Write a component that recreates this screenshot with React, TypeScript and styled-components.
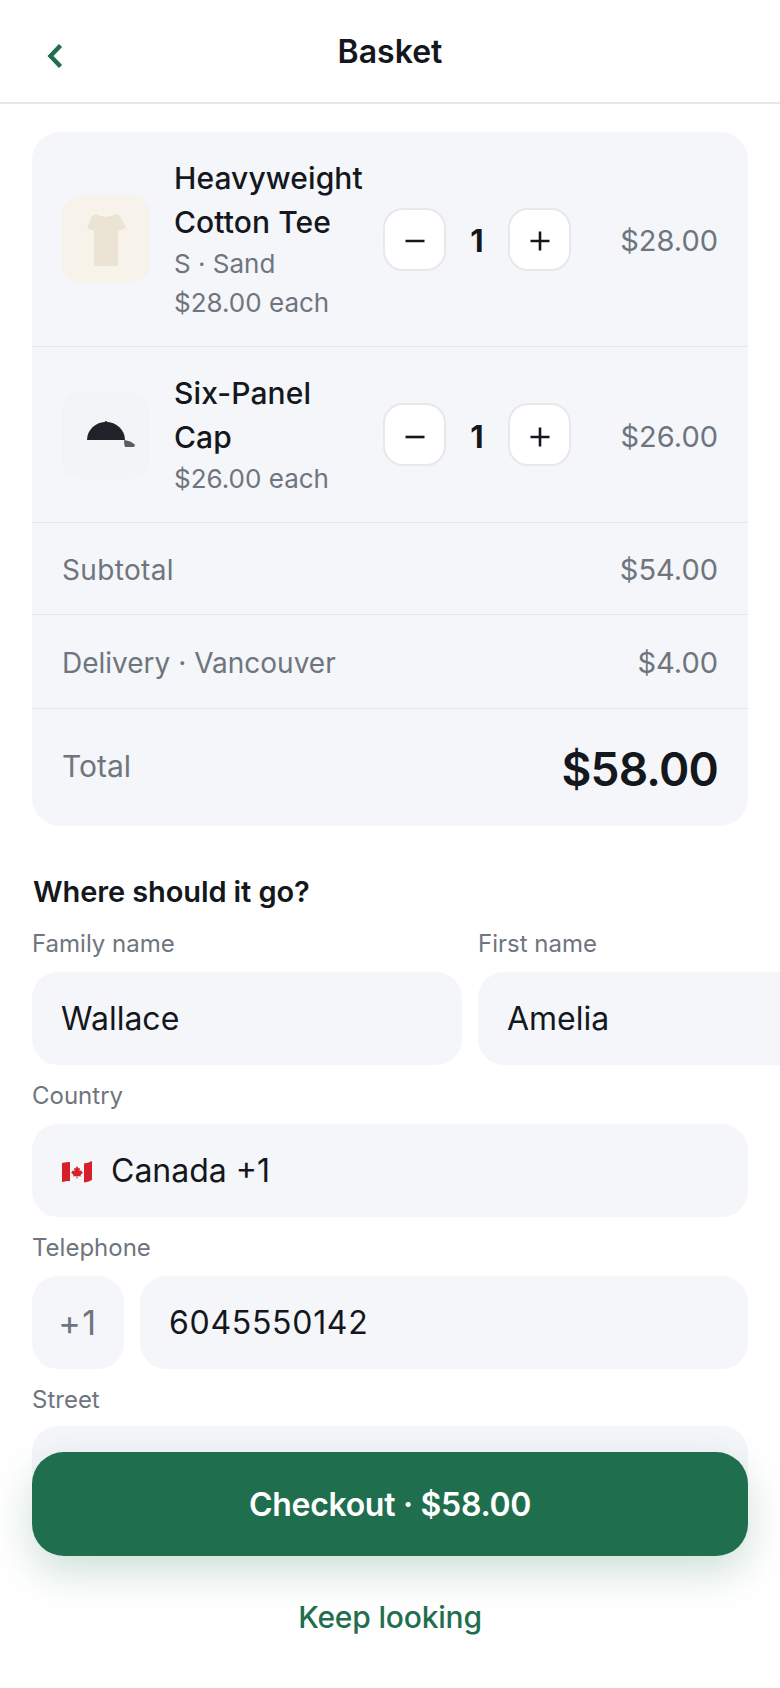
import styled, { createGlobalStyle } from 'styled-components';

const GlobalStyle = createGlobalStyle`
  html, body {
    margin: 0;
    padding: 0;
    height: 100%;
    overflow: hidden;
    background: #fff;
  }
  * {
    box-sizing: border-box;
  }
`;

const green = '#1f6f4f';
const ink = '#14171c';
const muted = '#6f757e';
const panel = '#f4f6fa';
const line = '#e5e7eb';

const Stepper = () => (
  <StepperBox>
    <StepButton aria-label="Less">
      <svg width="24" height="24" viewBox="0 0 24 24">
        <path d="M2.5 14 H21.5" stroke={ink} strokeWidth="2.6" />
      </svg>
    </StepButton>
    <Qty>1</Qty>
    <StepButton aria-label="More">
      <svg width="24" height="24" viewBox="0 0 24 24">
        <path d="M2.5 14 H21.5 M12 4.5 V23.5" stroke={ink} strokeWidth="2.6" />
      </svg>
    </StepButton>
  </StepperBox>
);

const App = () => {
  return (
    <Screen>
      <GlobalStyle />
      <Header>
        <BackButton aria-label="Back">
          <svg width="16" height="24" viewBox="0 0 16 24">
            <path d="M13.5 1.5 L3.5 12 L13.5 22.5" fill="none" stroke={green} strokeWidth="4.4" />
          </svg>
        </BackButton>
        <Title>Basket</Title>
      </Header>
      <Content>
        <Card>
          <ItemRow>
            <Thumb $bg="#f7f2ea">
              <svg width="88" height="88" viewBox="0 0 88 88">
                <path
                  d="M34 19 Q44 25 54 19 L58 21 L64 33 L56 36 L56 70 Q56 71 55 71 L33 71 Q32 71 32 70 L32 36 L25 33 L30 21 Z"
                  fill="#ebe3d4"
                />
              </svg>
            </Thumb>
            <ItemInfo>
              <ItemName>Heavyweight Cotton Tee</ItemName>
              <ItemMeta>S · Sand</ItemMeta>
              <ItemMeta>$28.00 each</ItemMeta>
            </ItemInfo>
            <Stepper />
            <ItemPrice>$28.00</ItemPrice>
          </ItemRow>
          <ItemRow>
            <Thumb $bg="#f3f4f7">
              <svg width="88" height="88" viewBox="0 0 88 88">
                <circle cx="44" cy="31.5" r="1.5" fill="#1f2229" />
                <path d="M25 49 A19 18 0 0 1 63 49 Z" fill="#1f2229" />
                <path d="M62 49 Q70 50 73 54 Q73 56 71 56 L63 56 Q62 53 62 49 Z" fill="#5a5c62" />
              </svg>
            </Thumb>
            <ItemInfo>
              <ItemName>Six-Panel Cap</ItemName>
              <ItemMeta>$26.00 each</ItemMeta>
            </ItemInfo>
            <Stepper />
            <ItemPrice>$26.00</ItemPrice>
          </ItemRow>
          <SummaryRow $height={92}>
            <SubtotalLabel>Subtotal</SubtotalLabel>
            <SummaryPrice>$54.00</SummaryPrice>
          </SummaryRow>
          <SummaryRow $height={94}>
            <span>Delivery · Vancouver</span>
            <SummaryPrice>$4.00</SummaryPrice>
          </SummaryRow>
          <TotalRow>
            <TotalLabel>Total</TotalLabel>
            <TotalAmount>$58.00</TotalAmount>
          </TotalRow>
        </Card>

        <SectionTitle>Where should it go?</SectionTitle>
        <NameGrid>
          <Field>
            <Label>Family name</Label>
            <Input>Wallace</Input>
          </Field>
          <Field>
            <Label>First name</Label>
            <Input>Amelia</Input>
          </Field>
        </NameGrid>
        <Field>
          <Label>Country</Label>
          <Input>
            <FlagIcon width="30" height="24" viewBox="0 0 30 24">
              <path d="M0 4 Q8 2 15 3.5 Q23 5 30 2 L30 21 Q23 24 15 22.5 Q8 21 0 23 Z" fill="#f7f7f7" />
              <path d="M0 4 Q4 3 8 3 L8 22 Q4 22 0 23 Z" fill="#d8202a" />
              <path d="M22 4.5 Q26 4 30 2 L30 21 Q26 23 22 23.5 Z" fill="#d8202a" />
              <path
                d="M15 7 L16.5 9.5 L18 9 L17.5 12 L19.5 11.5 L20 13 L21 13.5 L18.5 16 L18.8 17.5 L15.5 17 L15.5 19.5 L14.5 19.5 L14.5 17 L11.2 17.5 L11.5 16 L9 13.5 L10 13 L10.5 11.5 L12.5 12 L12 9 L13.5 9.5 Z"
                fill="#d8202a"
              />
            </FlagIcon>
            Canada +1
          </Input>
        </Field>
        <Field>
          <Label>Telephone</Label>
          <PhoneRow>
            <PhonePrefix>+1</PhonePrefix>
            <PhoneInput>6045550142</PhoneInput>
          </PhoneRow>
        </Field>
        <Field>
          <StreetLabel>Street</StreetLabel>
          <Input />
        </Field>
      </Content>

      <Footer>
        <CheckoutButton>Checkout · $58.00</CheckoutButton>
        <KeepLooking>Keep looking</KeepLooking>
      </Footer>
    </Screen>
  );
};

const Screen = styled.div`
  position: relative;
  width: 780px;
  height: 1688px;
  overflow: hidden;
  background: #fff;
  color: ${ink};
  font-family: Inter, 'Liberation Sans', sans-serif;
`;

const Header = styled.header`
  position: relative;
  height: 104px;
  display: flex;
  align-items: center;
  justify-content: center;
  border-bottom: 2px solid ${line};
`;

const BackButton = styled.button`
  position: absolute;
  left: 47px;
  top: 44px;
  padding: 0;
  border: 0;
  background: none;
  display: flex;
`;

const Title = styled.h1`
  margin: 2px 0 0;
  font-size: 32px;
  font-weight: 600;
  line-height: 40px;
`;

const Content = styled.main`
  padding: 28px 32px 0;
`;

const Card = styled.section`
  background: ${panel};
  border-radius: 28px;
  overflow: hidden;
`;

const ItemRow = styled.div`
  display: flex;
  align-items: center;
  gap: 24px;
  padding: 24px 30px;
  border-bottom: 1px solid ${line};
`;

const Thumb = styled.div<{ $bg: string }>`
  flex: none;
  width: 88px;
  height: 88px;
  border-radius: 20px;
  background: ${(p) => p.$bg};
  display: flex;
`;

const ItemInfo = styled.div`
  flex: 1;
  min-width: 0;
`;

const ItemName = styled.div`
  font-size: 30px;
  font-weight: 450;
  letter-spacing: 0.1px;
  line-height: 44px;
`;

const ItemMeta = styled.div`
  font-size: 26px;
  line-height: 39px;
  color: ${muted};
`;

const StepperBox = styled.div`
  flex: none;
  display: flex;
  align-items: center;
  gap: 16px;
`;

const StepButton = styled.button`
  width: 63px;
  height: 63px;
  padding: 0;
  border: 2px solid #e6e8ec;
  border-radius: 20px;
  background: #fff;
  display: flex;
  align-items: center;
  justify-content: center;
`;

const Qty = styled.span`
  width: 30px;
  padding-top: 3px;
  text-align: center;
  font-size: 31px;
  font-weight: 700;
`;

const ItemPrice = styled.div`
  flex: none;
  width: 123px;
  padding-top: 3px;
  text-align: right;
  font-size: 29px;
  color: ${muted};
`;

const SummaryRow = styled.div<{ $height: number }>`
  display: flex;
  justify-content: space-between;
  align-items: center;
  height: ${(p) => p.$height}px;
  padding: 2px 30px 0;
  font-size: 28px;
  color: ${muted};
  border-bottom: 1px solid ${line};
`;

const SubtotalLabel = styled.span`
  letter-spacing: 0.35px;
`;

const SummaryPrice = styled.span`
  font-size: 29px;
`;

const TotalRow = styled.div`
  display: flex;
  justify-content: space-between;
  align-items: center;
  height: 117px;
  padding: 0 30px;
  font-size: 30px;
  color: ${muted};
`;

const TotalLabel = styled.span`
  margin-top: -3px;
`;

const TotalAmount = styled.span`
  margin-top: 2px;
  font-size: 46px;
  font-weight: 600;
  letter-spacing: -0.8px;
  color: ${ink};
`;

const SectionTitle = styled.h2`
  margin: 46px 0 0 1px;
  font-size: 29px;
  font-weight: 600;
  letter-spacing: -0.1px;
  line-height: 40px;
`;

const NameGrid = styled.div`
  display: grid;
  grid-template-columns: 430px 430px;
  gap: 16px;
  margin-top: 1px;
`;

const Field = styled.div`
  display: flex;
  flex-direction: column;
`;

const Label = styled.label`
  font-size: 24px;
  line-height: 36px;
  padding-top: 13px;
  margin-bottom: 10px;
  color: ${muted};
`;

const StreetLabel = styled(Label)`
  margin-bottom: 8px;
`;

const Input = styled.div`
  flex: 1 1 auto;
  height: 93px;
  display: flex;
  align-items: center;
  gap: 20px;
  padding: 0 29px;
  border-radius: 26px;
  background: ${panel};
  font-size: 32px;
  color: ${ink};
`;

const FlagIcon = styled.svg`
  margin-left: 1px;
  margin-right: -1px;
`;

const PhoneRow = styled.div`
  display: flex;
  gap: 16px;
`;

const PhoneInput = styled(Input)`
  letter-spacing: 0.7px;
`;

const PhonePrefix = styled(Input)`
  flex: none;
  width: 92px;
  padding: 0;
  justify-content: center;
  font-size: 34px;
  letter-spacing: 1.5px;
  color: ${muted};
`;

const Footer = styled.footer`
  position: absolute;
  left: 0;
  right: 0;
  bottom: 0;
  height: 236px;
  padding: 0 32px;
`;

const CheckoutButton = styled.button`
  display: block;
  width: 100%;
  height: 104px;
  border: 0;
  border-radius: 32px;
  background: ${green};
  color: #fff;
  font-family: inherit;
  font-size: 32px;
  font-weight: 600;
  letter-spacing: -0.3px;
  box-shadow: 0 16px 40px rgba(31, 111, 79, 0.22);
`;

const KeepLooking = styled.button`
  display: block;
  width: 100%;
  margin-top: 31px;
  padding: 0;
  border: 0;
  background: none;
  color: ${green};
  font-family: inherit;
  font-size: 30px;
  font-weight: 500;
  letter-spacing: -0.2px;
  line-height: 60px;
`;

export default App;
